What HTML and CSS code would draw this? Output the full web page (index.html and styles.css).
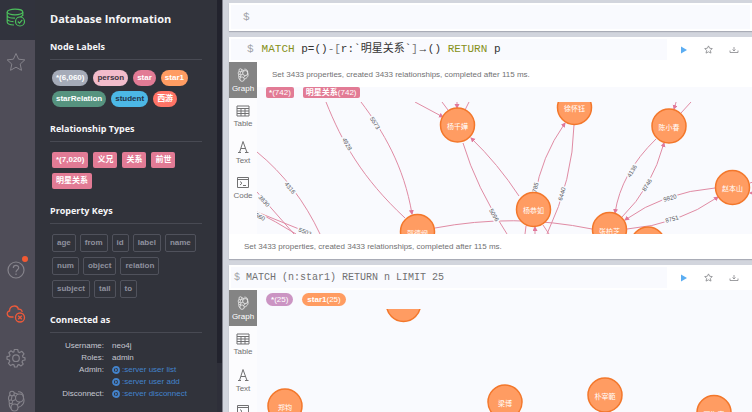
FILE: index.html
```
<!DOCTYPE html>
<html lang="zh-CN">
<head>
<meta charset="utf-8">
<meta name="viewport" content="width=device-width, initial-scale=1">
<title>Neo4j Browser</title>
<link rel="stylesheet" href="styles.css">
</head>
<body>
<svg class="defs" aria-hidden="true">
  <defs>
    <marker id="arrow" markerUnits="userSpaceOnUse" markerWidth="6" markerHeight="6" refX="4" refY="2.5" orient="auto"><path d="M0 0L5 2.5L0 5z" fill="#e0789a"/></marker>
    <symbol id="i-graph" viewBox="0 0 18 22"><g fill="none" stroke="currentColor" stroke-width="1.1" stroke-linejoin="round"><circle cx="5" cy="3.500" r="2.300"/><circle cx="12.500" cy="8" r="4"/><circle cx="7.500" cy="17.500" r="3.500"/><circle cx="3.800" cy="11.800" r="1.800"/><path d="M7.300 2.800L11 4.200M3 4.800C1 7 1.200 9 2.300 10.700M5 5.800L4.300 10M6.500 5.300L9 6.500M5.500 11L8.700 9.500M4.500 13.500L5.800 14.500M2.400 13C2 15 2.500 17 4.200 18.500M16.500 8C18 12 16 16 11 17.500M13 12L10 15M11 1.800C14 1.500 16.500 3.500 16.500 7"/></g></symbol>
    <symbol id="i-table" viewBox="0 0 14 12"><path d="M1 1H13V11H1zM1 3.500H13M1 6H13M1 8.500H13M5 3.500V11M9 3.500V11" fill="none" stroke="currentColor"/></symbol>
    <symbol id="i-text" viewBox="0 0 12 14"><path d="M1 12.500H4M8 12.500H11.500M2.500 12.500L6 1.500L10 12.500M4 8.500H8.500" fill="none" stroke="currentColor"/></symbol>
    <symbol id="i-code" viewBox="0 0 14 13"><path d="M1.500 1.500H12.500V11.500H1.500zM1.500 3.500H12.500M4 5.500L6 7.200L4 9M7 9.500H10" fill="none" stroke="currentColor"/></symbol>
    <symbol id="i-star" viewBox="0 0 20 20"><path d="M10 1.500L12.600 7.200L18.800 7.900L14.200 12.100L15.500 18.300L10 15.200L4.500 18.300L5.800 12.100L1.200 7.900L7.400 7.200z" fill="none" stroke="currentColor" stroke-linejoin="round"/></symbol>
    <symbol id="i-star-s" viewBox="0 0 20 20"><path d="M10 2L12.600 7.200L18.300 7.900L14.200 12.100L15.500 18L10 15.200L4.500 18L5.800 12.100L1.700 7.900L7.400 7.200z" fill="none" stroke="currentColor" stroke-width="1.800"/></symbol>
    <symbol id="i-down" viewBox="0 0 10 8"><path d="M1 4.500V6.500H9V4.500M5 1V4.500M3.500 3.500L5 5L6.500 3.500" fill="none" stroke="currentColor" stroke-width=".8"/></symbol>
    <symbol id="i-play" viewBox="0 0 8 8"><path d="M1 .5L7 4L1 7.500z" fill="currentColor"/></symbol>
    <symbol id="i-run" viewBox="0 0 8 8"><circle cx="4" cy="4" r="3" fill="none" stroke="currentColor" stroke-width="1.800"/><path d="M3.100 2.300L5.700 4L3.100 5.700z" fill="currentColor"/></symbol>
  </defs>
</svg>
<div class="app">
  <nav class="rail" aria-label="Sidebar">
    <button class="rail-btn is-active" aria-label="Database"><svg width="20" height="20" viewBox="0 0 20 20" fill="none" stroke="currentColor" stroke-width="1.200"><ellipse cx="9" cy="4" rx="7.800" ry="2.800"/><path d="M1.200 4V14C1.200 15.600 4 16.800 8 17M16.800 4V8M1.200 7.500C1.500 9 5 10.200 9 10.200M16.800 6.500C16.500 8 14 9.500 11 10M1.200 11C1.500 12.500 4 13.500 7.500 13.700"/><circle cx="14" cy="13.500" r="4.500" fill="#31333d"/><path d="M11.800 13.500L13.500 15.200L16.300 11.800"/></svg></button>
    <button class="rail-btn" aria-label="Favorites"><svg width="20" height="20"><use href="#i-star"/></svg></button>
    <div class="rail-end">
      <button class="rail-btn" aria-label="Help"><svg width="18" height="18" viewBox="0 0 18 18" fill="none" stroke="currentColor" stroke-width="1.200"><circle cx="9" cy="9" r="8"/><path d="M6.300 7C6.300 3.500 11.700 3.500 11.700 6.800C11.700 8.800 9 8.800 9 11.200M9 12.500V14"/></svg><span class="dot"></span></button>
      <button class="rail-btn is-error" aria-label="Connection lost"><svg width="20" height="20" viewBox="0 0 20 20" fill="none" stroke="currentColor" stroke-width="1.300"><path d="M7.500 13H5C.5 13 0 7.500 3.600 7C3.500 1 11.500 .5 12.300 5.200C14.500 4.800 16 6 16.200 8"/><circle cx="14" cy="13.500" r="4.500"/><path d="M12.200 11.700L15.800 15.300M15.800 11.700L12.200 15.300"/></svg></button>
      <button class="rail-btn" aria-label="Settings"><svg width="20" height="20" viewBox="0 0 20 20" fill="none" stroke="currentColor" stroke-width="1.200" stroke-linejoin="round"><path d="M8.300 1.500H11.700L12.300 4L13.600 4.600L15.900 3.300L18 5.800L16.500 7.900L17 9.200L19 9.900V12L16.700 12.500L16 13.900L17.200 16.100L14.900 18L12.900 16.600L11.700 17.100L11 19H8.500L8 16.900L6.600 16.400L4.500 17.600L2.500 15.400L3.800 13.300L3.300 12L1 11.300V8.700L3.400 8.200L4 6.900L2.800 4.800L5 2.800L7 4.200L7.900 3.900z"/><circle cx="10" cy="10.200" r="3.300"/></svg></button>
      <button class="rail-btn rail-last" aria-label="About"><svg width="18" height="22"><use href="#i-graph"/></svg></button>
    </div>
  </nav>

  <aside class="drawer">
    <h1>Database Information</h1>
    <section>
      <h2>Node Labels</h2>
      <div class="chips">
        <a class="chip all">*(6,060)</a><a class="chip person">person</a><a class="chip star">star</a><a class="chip star1">star1</a><a class="chip relation">starRelation</a><a class="chip student">student</a><a class="chip west">西游</a>
      </div>
    </section>
    <section>
      <h2>Relationship Types</h2>
      <div class="chips">
        <a class="chip rel">*(7,020)</a><a class="chip rel">义兄</a><a class="chip rel">关系</a><a class="chip rel">前世</a><a class="chip rel">明星关系</a>
      </div>
    </section>
    <section>
      <h2>Property Keys</h2>
      <div class="chips keys">
        <a class="key">age</a><a class="key">from</a><a class="key">id</a><a class="key">label</a><a class="key">name</a><a class="key">num</a><a class="key">object</a><a class="key">relation</a><a class="key">subject</a><a class="key">tail</a><a class="key">to</a>
      </div>
    </section>
    <section>
      <h2>Connected as</h2>
      <dl class="conn">
        <dt>Username:</dt><dd>neo4j</dd>
        <dt>Roles:</dt><dd>admin</dd>
        <dt>Admin:</dt><dd><a href="#"><svg width="8" height="8"><use href="#i-run"/></svg>:server user list</a></dd>
        <dt></dt><dd><a href="#"><svg width="8" height="8"><use href="#i-run"/></svg>:server user add</a></dd>
        <dt>Disconnect:</dt><dd><a href="#"><svg width="8" height="8"><use href="#i-run"/></svg>:server disconnect</a></dd>
      </dl>
    </section>
  </aside>
  <div class="gutter"></div>

  <main class="stream">
    <div class="frame editor">
      <label class="prompt" for="cmd">$</label><input id="cmd" type="text" autocomplete="off">
    </div>

    <article class="frame">
      <header class="head">
        <div class="query large"><span class="prompt">$</span><code><b>MATCH</b> p=()<i>-[</i>r:`明星关系`<i>]</i><span class="to">→</span>() <b>RETURN</b> p</code></div>
        <div class="tools">
          <button class="run" aria-label="Run"><svg width="8" height="8"><use href="#i-play"/></svg></button>
          <button aria-label="Favorite"><svg width="9" height="9"><use href="#i-star-s"/></svg></button>
          <button aria-label="Export"><svg width="10" height="8"><use href="#i-down"/></svg></button>
        </div>
      </header>
      <div class="body">
        <div class="tabs">
          <button class="tab is-on"><svg width="12" height="14"><use href="#i-graph"/></svg>Graph</button>
          <button class="tab"><svg width="14" height="12"><use href="#i-table"/></svg>Table</button>
          <button class="tab"><svg width="12" height="14"><use href="#i-text"/></svg>Text</button>
          <button class="tab"><svg width="14" height="13"><use href="#i-code"/></svg>Code</button>
        </div>
        <div class="view">
          <p class="message">Set 3433 properties, created 3433 relationships, completed after 115 ms.</p>
          <div class="legend"><span class="tag rel">*<small>(742)</small></span><span class="tag rel">明星关系<small>(742)</small></span></div>
          <svg class="graph tall" role="img" aria-label="Relationship graph">
            <g transform="translate(-257 -102)">
              <g class="edges">
                <path d="M326 102C342 142 362 178 405 218"/>
                <path class="to-node" d="M361 102C383 131 404 166 412 214"/>
                <path d="M257 152C284 174 305 202 320 234"/>
                <path d="M257 192L294 234"/>
                <path d="M257 212L299 229L312 234"/>
                <path d="M257 212Q275 221 296 234"/>
                <path class="to-node" d="M415 102L443 117"/>
                <path d="M442 102L448 110M469 102L465 110"/>
                <path class="to-node" d="M457 98V108"/>
                <path d="M463 143Q476 187 507 234"/>
                <path class="to-node" d="M519 196Q498 164 471 138"/>
                <path d="M435 228Q514 213 592 229"/>
                <path class="to-node" d="M535 196Q541 157 565 123"/>
                <path d="M574 125Q573 179 547 234"/>
                <path d="M526 226L525 234M543 225L549 234"/>
                <path class="to-node" d="M535 238V227"/>
                <path class="to-node" d="M656 139Q621 173 615 213"/>
                <path class="to-node" d="M622 217Q652 188 664 143"/>
                <path class="to-node" d="M715 188Q664 192 625 220"/>
                <path class="to-node" d="M627 229Q678 225 718 197"/>
                <path class="to-node" d="M677 99L674 109"/>
                <path d="M691 102L681 113M750 183L756 181"/>
                <path class="to-node" d="M758 193H750"/>
              </g>
              <g class="edge-text">
                <text transform="translate(347 144) rotate(60)">4928</text>
                <text transform="translate(375 123) rotate(58)">5573</text>
                <text transform="translate(290 188) rotate(51)">4316</text>
                <text transform="translate(264 201) rotate(48)">3830</text>
                <text transform="translate(260 217) rotate(26)">560</text>
                <text transform="translate(305 232) rotate(22)">5502</text>
                <text transform="translate(494 215) rotate(60)">5096</text>
                <text transform="translate(535 189) rotate(-76)">4785</text>
                <text transform="translate(562 194) rotate(-74)">6440</text>
                <text transform="translate(632 171) rotate(-58)">4136</text>
                <text transform="translate(647 185) rotate(-58)">8746</text>
                <text transform="translate(670 198) rotate(-15)">9820</text>
                <text transform="translate(672 219) rotate(-15)">8751</text>
              </g>
              <g class="nodes">
                <circle cx="457.500" cy="125" r="17"/><text x="457.500" y="126">杨千嬅</text>
                <circle cx="574.500" cy="107.500" r="17"/><text x="574.500" y="108">徐怀钰</text>
                <circle cx="669" cy="126" r="17"/><text x="669" y="127">陈小春</text>
                <circle cx="732.500" cy="187.500" r="17"/><text x="732.500" y="188">赵本山</text>
                <circle cx="533.500" cy="209.500" r="17"/><text x="533.500" y="210">杨恭如</text>
                <circle cx="609.500" cy="229.500" r="17"/><text x="609.500" y="231">张柏芝</text>
                <circle cx="648" cy="244" r="17"/>
                <circle cx="417.500" cy="231.500" r="17"/><text x="417.500" y="233">郭德纲</text>
              </g>
            </g>
          </svg>
        </div>
      </div>
      <footer class="foot">Set 3433 properties, created 3433 relationships, completed after 115 ms.</footer>
    </article>

    <article class="frame">
      <header class="head">
        <div class="query"><span class="prompt">$</span><code>MATCH (n:star1) RETURN n LIMIT 25</code></div>
        <div class="tools">
          <button class="run" aria-label="Run"><svg width="8" height="8"><use href="#i-play"/></svg></button>
          <button aria-label="Favorite"><svg width="9" height="9"><use href="#i-star-s"/></svg></button>
          <button aria-label="Export"><svg width="10" height="8"><use href="#i-down"/></svg></button>
        </div>
      </header>
      <div class="body">
        <div class="tabs">
          <button class="tab is-on"><svg width="12" height="14"><use href="#i-graph"/></svg>Graph</button>
          <button class="tab"><svg width="14" height="12"><use href="#i-table"/></svg>Table</button>
          <button class="tab"><svg width="12" height="14"><use href="#i-text"/></svg>Text</button>
          <button class="tab"><svg width="14" height="13"><use href="#i-code"/></svg>Code</button>
        </div>
        <div class="view">
          <div class="legend nodes-legend"><span class="tag pill mauve">*<small>(25)</small></span><span class="tag pill star1">star1<small>(25)</small></span></div>
          <svg class="graph" role="img" aria-label="Node graph">
            <g transform="translate(-257 -309)" class="nodes">
              <circle cx="403.500" cy="304.500" r="17"/>
              <circle cx="285" cy="406" r="17"/><text x="285" y="407">郑钧</text>
              <circle cx="505" cy="402" r="17"/><text x="505" y="403">梁博</text>
              <circle cx="605" cy="395" r="17"/><text x="605" y="396">朴宰範</text>
              <circle cx="714" cy="412.500" r="17"/><text x="714" y="414">丁海寅</text>
            </g>
          </svg>
        </div>
      </div>
    </article>
  </main>
</div>
</body>
</html>
```
FILE: styles.css
```
* { box-sizing: border-box; }
body { margin: 0; overflow: hidden; font: 8px/12px "Liberation Sans", "Noto Sans CJK SC", sans-serif; color: #717172; background: #d2d5dd; }
h1, h2, p, dl, dd { margin: 0; }
button { border: 0; padding: 0; background: none; color: inherit; font: inherit; }
a { text-decoration: none; }
svg { display: block; flex: none; }
.defs { position: absolute; width: 0; height: 0; }
.app { display: flex; height: 100vh; }

/* icon rail */
.rail { flex: none; width: 35px; display: flex; flex-direction: column; background: #4f4d58; color: #85838b; }
.rail-btn { position: relative; flex: none; height: 44px; padding-right: 3px; display: flex; align-items: center; justify-content: center; width: 100%; }
.rail-btn.is-active { height: 40px; padding-bottom: 4px; background: #31333d; color: #4cbf5c; }
.rail-btn.is-error { color: #ee5a3a; }
.rail-end { margin-top: auto; }
.rail-last { height: 32px; align-items: flex-end; }
.dot { position: absolute; top: 8px; left: 22px; width: 6px; height: 6px; border-radius: 50%; background: #f25a33; }

/* drawer */
.drawer { flex: none; width: 182px; padding: 12px 15px 0; background: #31333b; color: #c6c8d2; overflow: hidden; }
.gutter { flex: none; width: 5px; background: linear-gradient(#22232d 363px, #2e2f39 363px); }
h1, h2 { font-family: "Open Sans", sans-serif; font-weight: 700; color: #f6f6f8; }
h1 { font-size: 11px; line-height: 14px; margin-bottom: 15px; }
h2 { font-size: 9px; line-height: 12px; padding-bottom: 6px; border-bottom: 1px solid #484a53; }
section { margin-bottom: 16px; }
.chips { display: flex; flex-wrap: wrap; gap: 5px; padding: 10px 0 0 2px; }
.chips.keys { column-gap: 4px; padding-right: 4px; }
.chip { height: 16px; padding: 0 4px; border-radius: 8px; line-height: 16px; font-weight: 700; color: #fff; }
.all { background: #a5abb8; }
.person { background: #f2bccb; color: #3a3340; }
.star, .rel { background: #e27b95; }
.star1 { background: #ff9c62; }
.relation { background: #56937f; }
.student { background: #4cb8e6; color: #24344a; }
.west { background: #ff7466; }
.rel { border-radius: 2px; }
.key { height: 18px; padding: 0 4px; border: 1px solid #50525c; border-radius: 2px; line-height: 16px; font-weight: 700; color: #8f919e; }
.conn { display: grid; grid-template-columns: 54px 1fr; column-gap: 8px; padding-top: 7px; grid-auto-rows: 12px; white-space: nowrap; }
.conn dt { text-align: right; }
.conn a { display: flex; align-items: center; gap: 2px; color: #4383cc; }

/* result stream */
.stream { flex: 1; min-width: 0; padding: 3px 0 0 6px; border-left: 1px solid #83848e; overflow: hidden; }
.frame { margin-bottom: 6px; background: #fff; box-shadow: 0 1px 1px #a9acb6; }
.prompt { font: 11px/22px "Liberation Mono", monospace; color: #a0a2a6; }
.editor { display: flex; padding: 2px; height: 28px; }
.editor .prompt { flex: none; width: 28px; padding-left: 12px; line-height: 24px; background: #f9fafe; }
.editor input { flex: 1; min-width: 0; border: 0; padding: 0; outline: 0; background: #f9fafe; font: 11px "Liberation Mono", monospace; }
.head { display: flex; height: 25px; padding: 2px 0; }
.query { flex: 1; margin-left: 2px; display: flex; gap: 6px; padding-left: 3px; background: #f9fafe; overflow: hidden; }
code { font: 10px/21px "Liberation Mono", "Noto Sans CJK SC", monospace; color: #717172; white-space: pre; }
.query .prompt { font-size: 10px; line-height: 21px; }
.query.large { gap: 8px; padding-left: 16px; }
.large code, .large .prompt { font-size: 11px; }
.large code { color: #333; }
code b { font-weight: 400; color: #859019; }
code i { font-style: normal; color: #777; }
.to { display: inline-block; width: 10px; text-align: center; }
.tools { flex: none; width: 85px; display: flex; padding-left: 4px; color: #85868a; }
.tools button { width: 25px; display: flex; align-items: center; justify-content: center; }
.tools .run { color: #5badf2; }
.body { display: flex; }
.tabs { flex: none; width: 28px; background: #fcfcfe; }
.tab { width: 28px; height: 36px; padding-top: 2px; display: flex; flex-direction: column; align-items: center; justify-content: center; gap: 1px; line-height: 12px; }
.tab.is-on { background: #848484; color: #fff; }
.view { flex: 1; min-width: 0; background: #f9fafe; }
.message { height: 25px; padding-left: 15px; line-height: 25px; background: #fff; }
.legend { display: flex; height: 15px; padding-left: 9px; gap: 9px; }
.tag { height: 11px; padding: 0 3px; line-height: 11px; font-weight: 700; color: #fff; }
.tag small { font-size: 8px; font-weight: 400; }
.nodes-legend { height: 19px; padding-top: 3px; }
.pill { height: 13px; padding: 0 5px; border-radius: 7px; line-height: 13px; }
.mauve { background: #cb94c3; }
.foot { padding-left: 15px; line-height: 25px; }

/* graphs */
.graph { width: 100%; height: 160px; overflow: hidden; }
.tall { height: 132px; }
.edges path { fill: none; stroke: #e08ba4; }
.edges .to-node { marker-end: url(#arrow); }
.edge-text text { font-size: 6px; fill: #55565c; stroke: #f9fafe; stroke-width: 3px; paint-order: stroke; text-anchor: middle; dominant-baseline: central; }
.nodes circle { fill: #ff9c62; stroke: #f3772b; stroke-width: 1.5px; }
.nodes text { font-size: 7px; fill: #fff; text-anchor: middle; dominant-baseline: central; }
```
